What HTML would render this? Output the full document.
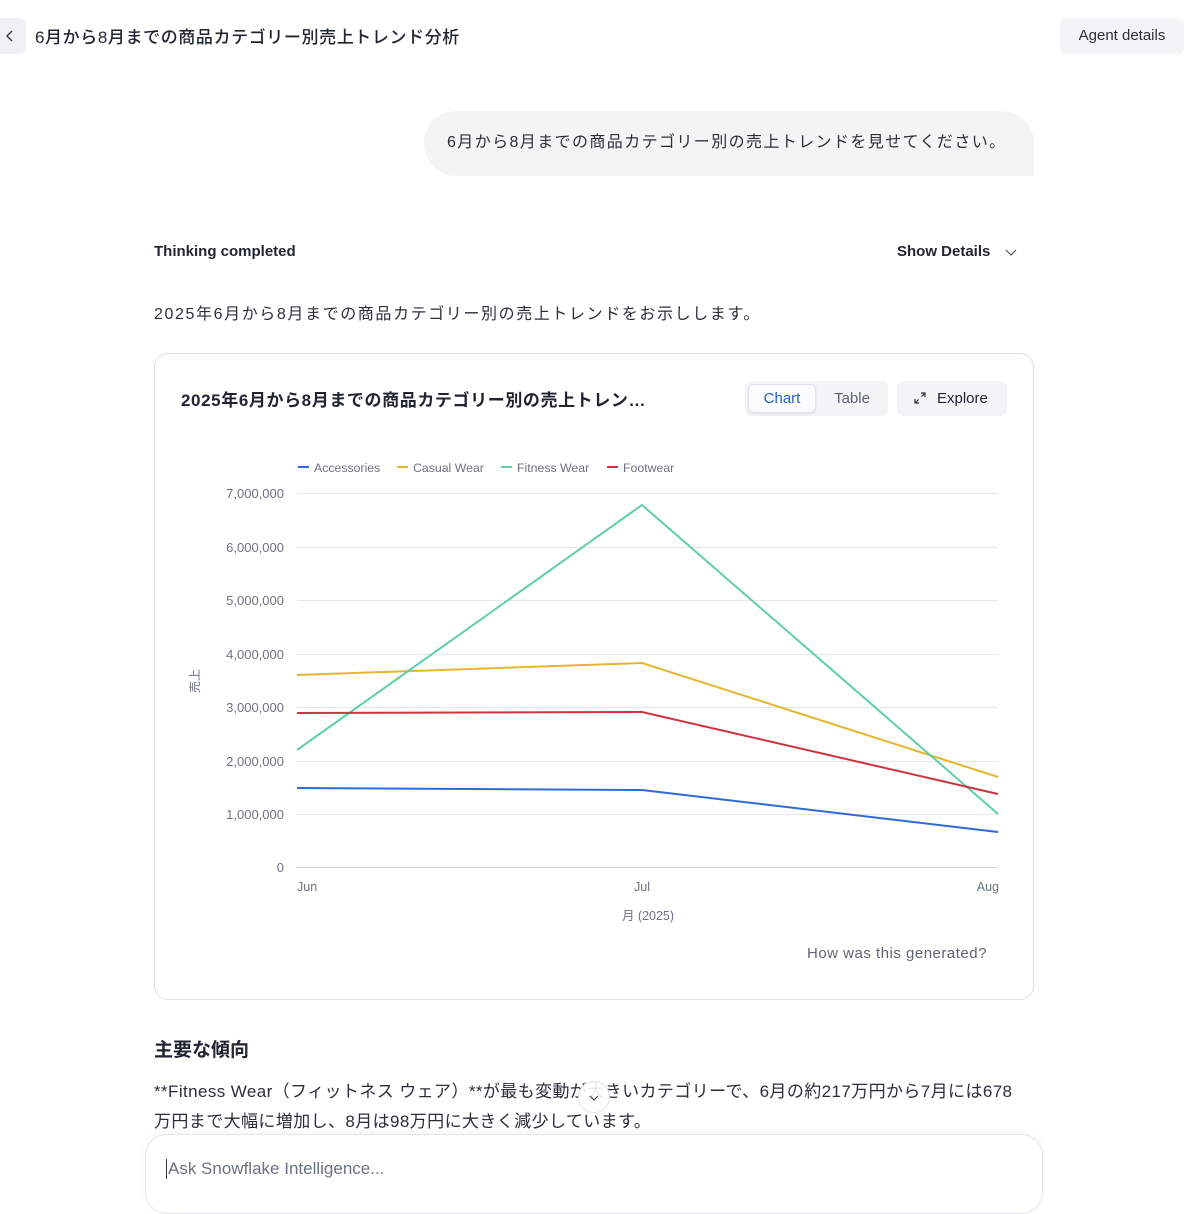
<!DOCTYPE html>
<html><head><meta charset="utf-8">
<style>
*{margin:0;padding:0;box-sizing:border-box}
body{width:1184px;height:1178px;overflow:hidden;background:#fff;font-family:"Liberation Sans","Noto Sans CJK JP",sans-serif;color:#1e2530;position:relative}
.abs{position:absolute}
</style></head><body>
<div class="abs" style="left:0;top:18px;width:26px;height:36px;background:#eef0f3;border-radius:0 6px 6px 0"></div>
<svg class="abs" style="left:4px;top:29px" width="12" height="14"><path d="M8 2 L3 7 L8 12" fill="none" stroke="#333" stroke-width="1.4"/></svg>
<div class="abs" style="left:35px;top:23px;font-size:17px;font-weight:500;color:#1e2530;letter-spacing:0.6px">6月から8月までの商品カテゴリー別売上トレンド分析</div>
<div class="abs" style="left:1060px;top:18px;width:124px;height:36px;background:#f3f4f6;border-radius:6px;font-size:15px;line-height:36px;text-align:center;color:#2a2f37">Agent details</div>

<div class="abs" style="left:424px;top:111px;width:610px;height:65px;background:#f4f4f5;border-radius:32px 32px 0 32px;font-size:16px;line-height:63px;padding-left:23px;color:#2a2f37;letter-spacing:1.4px">6月から8月までの商品カテゴリー別の売上トレンドを見せてください。</div>

<div class="abs" style="left:154px;top:243px;font-size:15px;font-weight:700">Thinking completed</div>
<div class="abs" style="left:897px;top:243px;font-size:15px;font-weight:600">Show Details</div>
<svg class="abs" style="left:1005px;top:247px" width="12" height="10"><path d="M1 3 L6 8 L11 3" fill="none" stroke="#555" stroke-width="1.2"/></svg>

<div class="abs" style="left:154px;top:300px;font-size:16px;color:#2a2f37;letter-spacing:1.6px">2025年6月から8月までの商品カテゴリー別の売上トレンドをお示しします。</div>

<div class="abs" style="left:154px;top:353px;width:880px;height:647px;border:1px solid #dcdfe4;border-radius:14px"></div>
<div class="abs" style="left:181px;top:386px;font-size:17px;font-weight:600;letter-spacing:0.6px">2025年6月から8月までの商品カテゴリー別の売上トレン…</div>
<div class="abs" style="left:745px;top:381px;width:143px;height:35px;background:#f3f4f6;border-radius:7px"></div>
<div class="abs" style="left:748px;top:384px;width:68px;height:29px;background:#fafbfc;border:1px solid #dde3ee;border-radius:6px;box-shadow:0 1px 2px rgba(0,0,0,.08);font-size:15px;color:#2b5fc4;text-align:center;line-height:27px">Chart</div>
<div class="abs" style="left:818px;top:384px;width:68px;height:29px;font-size:15px;color:#5b6473;text-align:center;line-height:29px">Table</div>
<div class="abs" style="left:897px;top:381px;width:110px;height:35px;background:#f3f4f6;border-radius:7px;font-size:15px;line-height:35px;padding-left:40px;color:#1e2530">Explore</div>
<svg class="abs" style="left:912px;top:390px" width="16" height="16"><path d="M9 3 H13 V7 M13 3 L9.5 6.5 M7 13 H3 V9 M3 13 L6.5 9.5" fill="none" stroke="#333" stroke-width="1.2"/></svg>

<svg class="abs" style="left:0;top:0" width="1184" height="1000" font-family="Liberation Sans, sans-serif">
<g font-size="12.3" fill="#6b7280">
<line x1="298" y1="467" x2="309" y2="467" stroke="#2f6bd8" stroke-width="2"/><text x="314" y="472">Accessories</text>
<line x1="397" y1="467" x2="408" y2="467" stroke="#e5b52d" stroke-width="2"/><text x="413" y="472">Casual Wear</text>
<line x1="501" y1="467" x2="512" y2="467" stroke="#5fcfa8" stroke-width="2"/><text x="517" y="472">Fitness Wear</text>
<line x1="607" y1="467" x2="618" y2="467" stroke="#d0323e" stroke-width="2"/><text x="623" y="472">Footwear</text>
</g>
<g stroke="#e5e7eb" stroke-width="1">
<line x1="297" y1="493.5" x2="998" y2="493.5"/><line x1="297" y1="547.5" x2="998" y2="547.5"/><line x1="297" y1="600.5" x2="998" y2="600.5"/><line x1="297" y1="654.5" x2="998" y2="654.5"/><line x1="297" y1="707.5" x2="998" y2="707.5"/><line x1="297" y1="761.5" x2="998" y2="761.5"/><line x1="297" y1="814.5" x2="998" y2="814.5"/><line x1="297" y1="867.5" x2="998" y2="867.5" stroke="#d1d5db"/>
</g>
<g font-size="13" fill="#6b7280" text-anchor="end">
<text x="284" y="498">7,000,000</text><text x="284" y="552">6,000,000</text><text x="284" y="605">5,000,000</text><text x="284" y="659">4,000,000</text><text x="284" y="712">3,000,000</text><text x="284" y="766">2,000,000</text><text x="284" y="819">1,000,000</text><text x="284" y="872">0</text>
</g>
<text x="199" y="681" font-size="12" fill="#6b7280" font-family="Noto Sans CJK JP, sans-serif" transform="rotate(-90 199 681)" text-anchor="middle">売上</text>
<g font-size="12.5" fill="#6b7280"><text x="297" y="891">Jun</text><text x="642" y="891" text-anchor="middle">Jul</text><text x="999" y="891" text-anchor="end">Aug</text>
<text x="648" y="920" text-anchor="middle" font-family="Liberation Sans, Noto Sans CJK JP, sans-serif">月 (2025)</text></g>
<g fill="none" stroke-width="2">
<polyline points="297,788 642,790 998,832" stroke="#2f6bd8"/>
<polyline points="297,675 642,663 998,777" stroke="#e5b52d"/>
<polyline points="297,750 642,505 998,814" stroke="#5fcfa8"/>
<polyline points="297,713 642,712 998,794" stroke="#d0323e"/>
</g>
</svg>
<div class="abs" style="left:807px;top:945px;font-size:15px;color:#5b6473;letter-spacing:0.5px">How was this generated?</div>

<div class="abs" style="left:154px;top:1035px;font-size:19px;font-weight:700">主要な傾向</div>
<div class="abs" style="left:154px;top:1077px;width:868px;font-size:17px;line-height:30px;color:#2a2f37;letter-spacing:0.4px">**Fitness Wear（フィットネス ウェア）**が最も変動が大きいカテゴリーで、6月の約217万円から7月には678万円まで大幅に増加し、8月は98万円に大きく減少しています。</div>
<div class="abs" style="left:578px;top:1081px;width:32px;height:32px;border-radius:50%;background:rgba(255,255,255,.9);border:1px solid #e2e4e8"></div>
<svg class="abs" style="left:588px;top:1093px" width="12" height="10"><path d="M2 3 L6 7 L10 3" fill="none" stroke="#444" stroke-width="1.2"/></svg>
<div class="abs" style="left:145px;top:1134px;width:898px;height:80px;background:#fff;border:1px solid #e4e6ea;border-radius:22px;box-shadow:0 -2px 8px rgba(0,0,0,.04)"></div>
<div class="abs" style="left:166px;top:1159px;font-size:17px;color:#6b7280;border-left:1.5px solid #333;padding-left:1px">Ask Snowflake Intelligence...</div>
</body></html>
